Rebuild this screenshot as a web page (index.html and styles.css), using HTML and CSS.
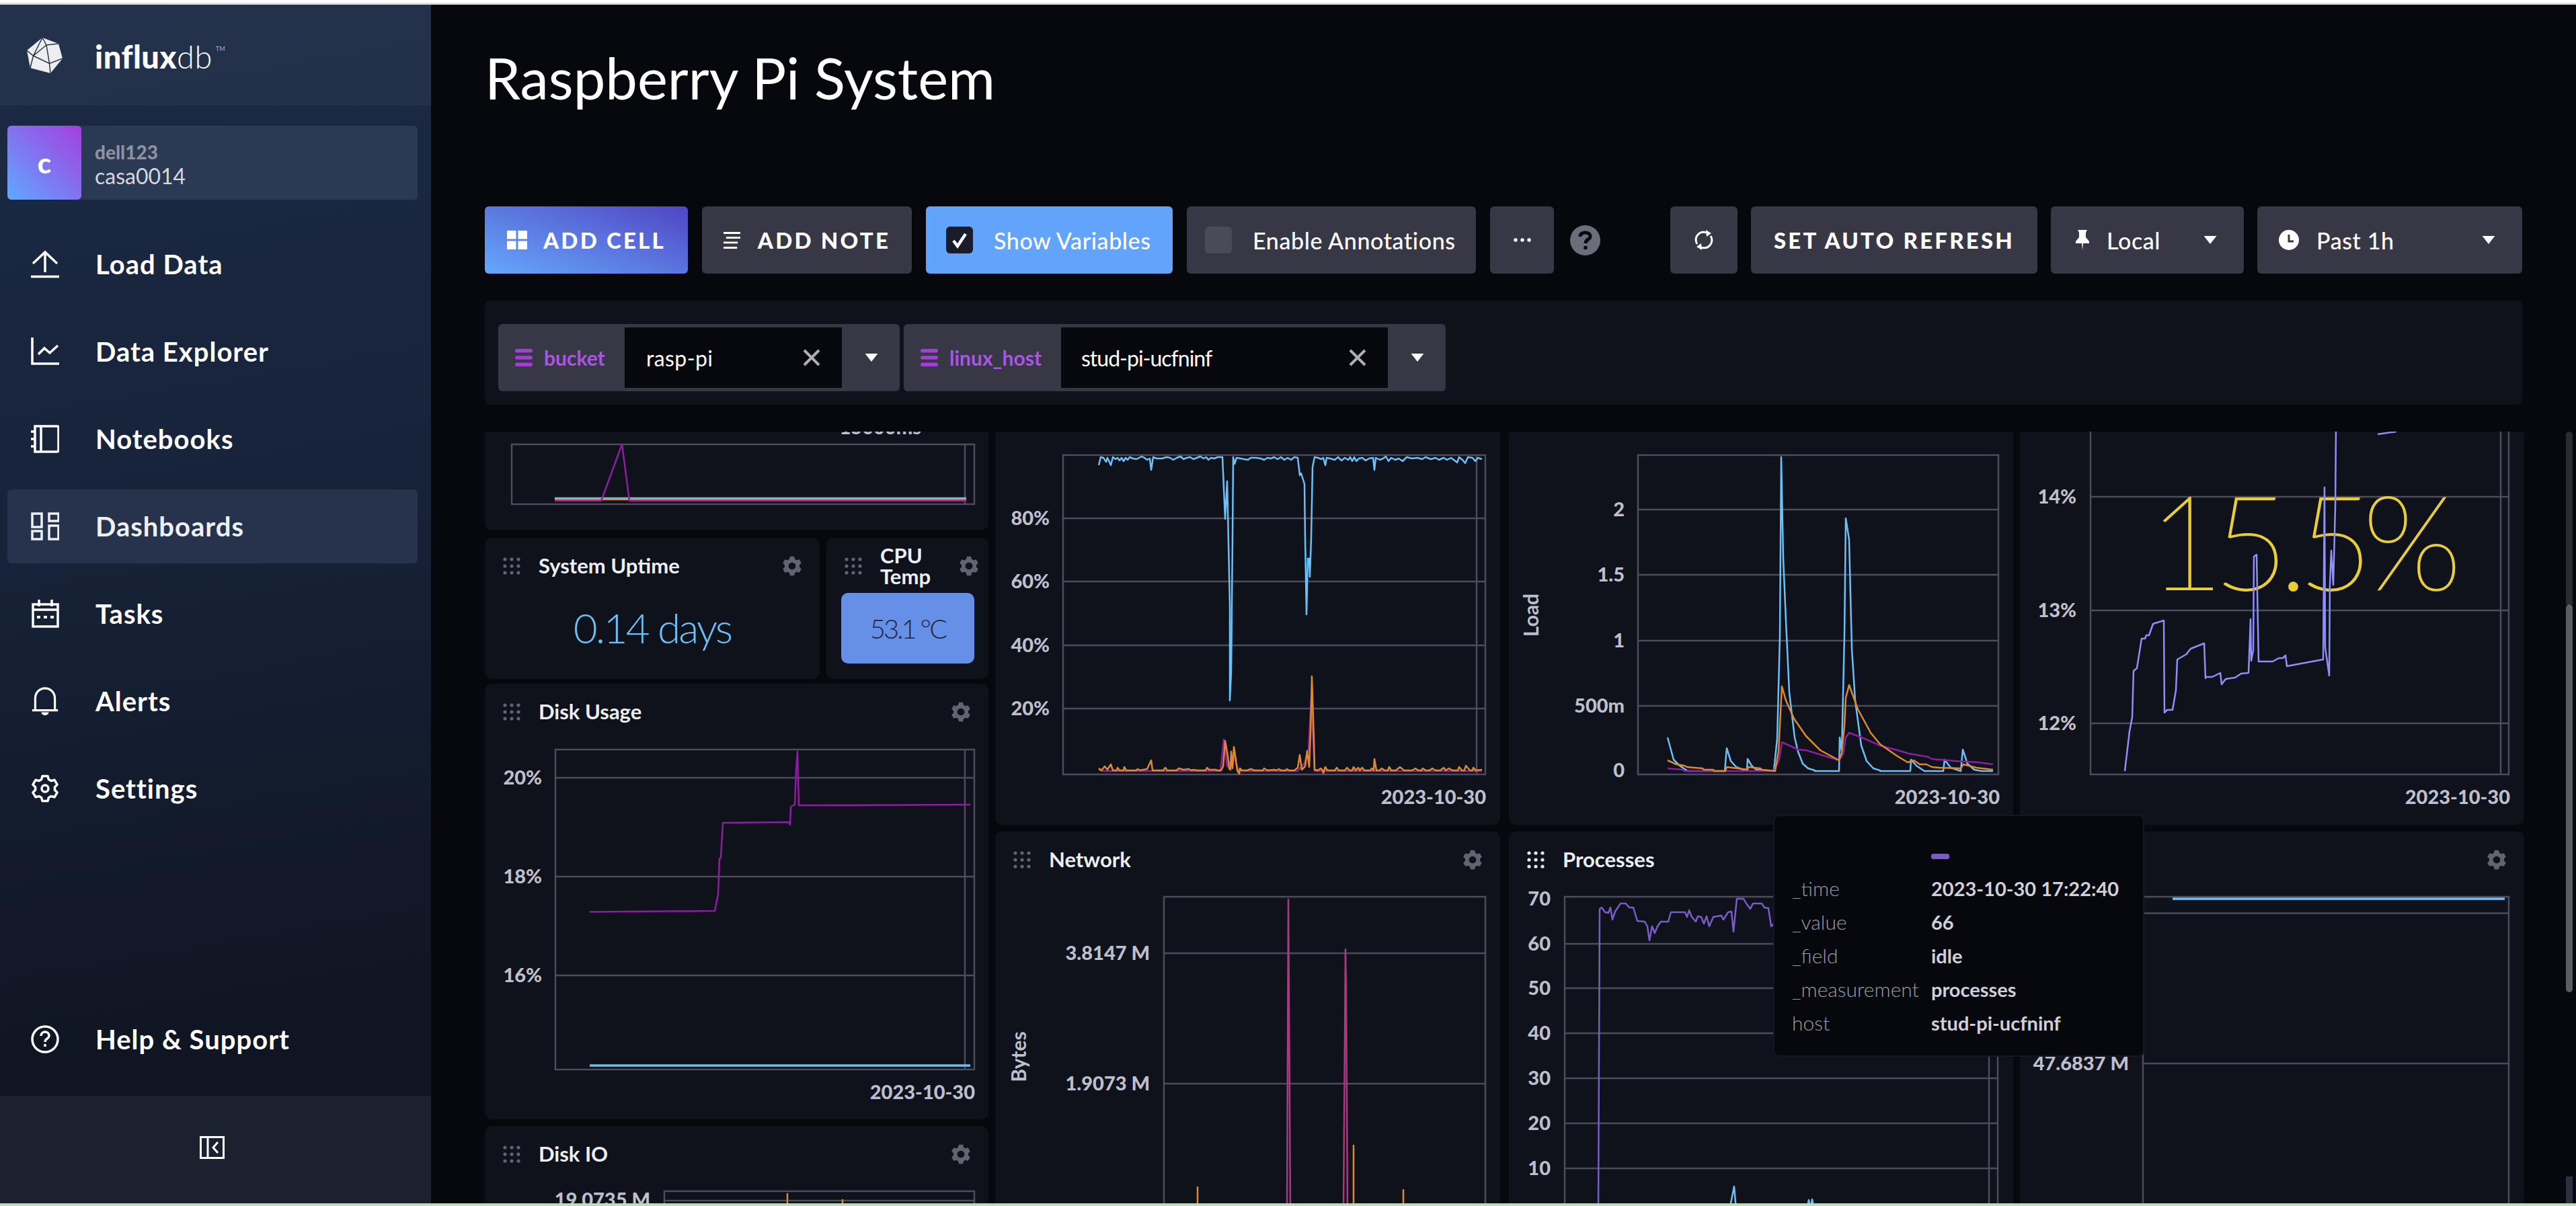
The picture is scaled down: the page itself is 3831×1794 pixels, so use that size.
FILE: index.html
```html
<!DOCTYPE html>
<html lang="en">
<head>
    <meta charset="UTF-8">
    <title>Raspberry Pi System</title>
    <link rel="stylesheet" href="styles.css">
</head>
<body>
    <svg class="sprite" xmlns="http://www.w3.org/2000/svg">
        <symbol id="cog" viewBox="0 0 42 42">
            <path fill-rule="evenodd" d="M17 2.4H25L26.4 7.6 29.9 9.6 35.1 8.3 39.1 15.1 35.4 19V23L39.1 26.9 35.1 33.7 29.9 32.4 26.4 34.4 25 39.6H17L15.6 34.4 12.1 32.4 6.9 33.7 2.9 26.9 6.6 23V19L2.9 15.1 6.9 8.3 12.1 9.6 15.6 7.6ZM21 14a7 7 0 1 0 .01 0Z"/>
        </symbol>
        <symbol id="dots" viewBox="0 0 26 26">
            <circle cx="3" cy="3" r="2.6"/><circle cx="13" cy="3" r="2.6"/><circle cx="23" cy="3" r="2.6"/>
            <circle cx="3" cy="13" r="2.6"/><circle cx="13" cy="13" r="2.6"/><circle cx="23" cy="13" r="2.6"/>
            <circle cx="3" cy="23" r="2.6"/><circle cx="13" cy="23" r="2.6"/><circle cx="23" cy="23" r="2.6"/>
        </symbol>
        <symbol id="caret" viewBox="0 0 22 14">
            <path d="M0 0H22L11 14Z"/>
        </symbol>
        <symbol id="menu" viewBox="0 0 26 26">
            <rect x="0" y="0" width="26" height="5.4" rx="2.7"/><rect x="0" y="10.3" width="26" height="5.4" rx="2.7"/><rect x="0" y="20.6" width="26" height="5.4" rx="2.7"/>
        </symbol>
    </svg>

    <div class="edge-top"></div>

    <div class="app">
        <aside class="sidebar">
            <div class="brand">
                <svg class="brand-mark" viewBox="0 0 53 55">
                    <path class="brand-body" d="M23 1 47 10 53 32 35 54 5 46 0 20Z"/>
                    <path class="brand-cuts" d="M23 1 29 12 47 10M29 12 9.500 28 0 20M9.500 28 5 46M9.500 28 33.500 39.500 53 32M29 12 33.500 39.500 35 54M23 1 9.500 28"/>
                </svg>
                <span class="brand-name"><b>influx</b>db<sup>TM</sup></span>
            </div>

            <nav class="nav">
                <div class="org">
                    <div class="org-avatar">c</div>
                    <div class="org-text">
                        <span class="org-user">dell123</span>
                        <span class="org-name">casa0014</span>
                    </div>
                </div>

                <a class="nav-item">
                    <svg class="nav-icon" viewBox="0 0 42 42"><path d="M3 20 21 3 39 20M21 3V33"/><path d="M0 39.500H42"/></svg>
                    <span>Load Data</span>
                </a>
                <a class="nav-item">
                    <svg class="nav-icon" viewBox="0 0 42 42"><path d="M2 0V39H42"/><path d="M11 25 20 16 28 23 40 12"/></svg>
                    <span>Data Explorer</span>
                </a>
                <a class="nav-item">
                    <svg class="nav-icon" viewBox="0 0 42 42"><path d="M6 2H39Q41 2 41 4V38Q41 40 39 40H6ZM15 2V40M0 10H6M0 21H6M0 32H6"/></svg>
                    <span>Notebooks</span>
                </a>
                <a class="nav-item nav-item-active">
                    <svg class="nav-icon" viewBox="0 0 42 42"><path d="M2 2H16V22H2ZM27 2H41V13H27ZM2 28H16V40H2ZM27 20H41V40H27Z"/></svg>
                    <span>Dashboards</span>
                </a>
                <a class="nav-item">
                    <svg class="nav-icon" viewBox="0 0 42 42"><path d="M3 7H40V40H3ZM3 15H40M12 0V10M31 0V10"/><path class="nav-icon-dash" d="M9 26H34"/></svg>
                    <span>Tasks</span>
                </a>
                <a class="nav-item">
                    <svg class="nav-icon" viewBox="0 0 42 46"><path d="M5 37V19C5 9 12 2 21 2S37 9 37 19V37M0 38H42"/><path class="nav-icon-fill" d="M15 41H27C27 44 24 46 21 46S15 44 15 41Z"/></svg>
                    <span>Alerts</span>
                </a>
                <a class="nav-item">
                    <svg class="nav-icon" viewBox="0 0 42 42"><path stroke-linejoin="round" d="M17 2.400H25L26.400 7.600 29.900 9.600 35.100 8.300 39.100 15.100 35.400 19V23L39.100 26.900 35.100 33.700 29.900 32.400 26.400 34.400 25 39.600H17L15.600 34.400 12.100 32.400 6.900 33.700 2.900 26.900 6.600 23V19L2.900 15.100 6.900 8.300 12.100 9.600 15.600 7.600Z"/><circle cx="21" cy="21" r="5"/></svg>
                    <span>Settings</span>
                </a>
                <a class="nav-item nav-item-bottom">
                    <svg class="nav-icon" viewBox="0 0 42 42"><circle cx="21" cy="21" r="19"/><path d="M15 16C15 12 18 10 21 10S27 12 27 16 21 20 21 25"/><path d="M21 28V32"/></svg>
                    <span>Help &amp; Support</span>
                </a>
            </nav>

            <div class="sidebar-foot">
                <svg class="collapse-icon" viewBox="0 0 37 34"><path d="M1.500 1.500H35.500V32.500H1.500ZM12 1.500V32.500M27 9 20 17 27 25"/></svg>
            </div>
        </aside>

        <main class="main">
            <h1 class="page-title">Raspberry Pi System</h1>

            <div class="toolbar">
                <button class="btn btn-cell">
                    <svg class="btn-icon" viewBox="0 0 30 28"><path d="M0 0H13.500V12.500H0ZM16.500 0H30V12.500H16.500ZM0 15.500H13.500V28H0ZM16.500 15.500H30V28H16.500Z"/></svg>
                    <span class="btn-caps">ADD CELL</span>
                </button>
                <button class="btn btn-note">
                    <svg class="btn-icon" viewBox="0 0 26 26"><path d="M0 0H26V3H0ZM4 7.500H26V10.500H4ZM0 15H22V18H0ZM0 23H21V26H0Z"/></svg>
                    <span class="btn-caps">ADD NOTE</span>
                </button>
                <button class="btn btn-toggle btn-on">
                    <span class="check"><svg viewBox="0 0 40 40"><path d="M11 21 17 29 29 11"/></svg></span>
                    <span>Show Variables</span>
                </button>
                <button class="btn btn-toggle btn-off">
                    <span class="check check-empty"></span>
                    <span>Enable Annotations</span>
                </button>
                <button class="btn btn-more">
                    <svg class="more-icon" viewBox="0 0 22 5"><circle cx="2.500" cy="2.500" r="2.300"/><circle cx="11" cy="2.500" r="2.300"/><circle cx="19.500" cy="2.500" r="2.300"/></svg>
                </button>
                <svg class="help-dot" viewBox="0 0 45 45">
                    <circle cx="22.500" cy="22.500" r="22.500"/>
                    <path d="M15 17C15 13 18 11 22.500 11S30 13 30 17 23 21 23 27"/>
                    <path d="M23 31V36"/>
                </svg>

                <div class="toolbar-right">
                    <button class="btn btn-refresh">
                        <svg class="refresh-icon" viewBox="0 0 30 30"><path d="M5 21A11.500 11.500 0 0 1 20 4.500M25 9A11.500 11.500 0 0 1 10 25.500"/><path class="refresh-tip" d="M18 0 26 5 19 10ZM12 30 4 25 11 20Z"/></svg>
                    </button>
                    <button class="btn btn-auto"><span class="btn-caps">SET AUTO REFRESH</span></button>
                    <button class="btn btn-drop btn-local">
                        <svg class="pin-icon" viewBox="0 0 20 30"><path d="M3 0H17L15 4V11L20 17V20H11L10 30 9 20H0V17L5 11V4Z"/></svg>
                        <span>Local</span>
                        <svg class="drop-caret"><use href="#caret"/></svg>
                    </button>
                    <button class="btn btn-drop btn-range">
                        <svg class="clock-icon" viewBox="0 0 30 30"><circle cx="15" cy="15" r="15"/><path d="M15 7V17H22"/></svg>
                        <span>Past 1h</span>
                        <svg class="drop-caret"><use href="#caret"/></svg>
                    </button>
                </div>
            </div>

            <div class="variables">
                <div class="var var-bucket">
                    <svg class="var-menu"><use href="#menu"/></svg>
                    <span class="var-name">bucket</span>
                    <div class="var-input">
                        <span>rasp-pi</span>
                        <svg class="var-clear" viewBox="0 0 26 26"><path d="M2 2 24 24M24 2 2 24"/></svg>
                    </div>
                    <svg class="var-caret"><use href="#caret"/></svg>
                </div>
                <div class="var var-host">
                    <svg class="var-menu"><use href="#menu"/></svg>
                    <span class="var-name">linux_host</span>
                    <div class="var-input">
                        <span>stud-pi-ucfninf</span>
                        <svg class="var-clear" viewBox="0 0 26 26"><path d="M2 2 24 24M24 2 2 24"/></svg>
                    </div>
                    <svg class="var-caret"><use href="#caret"/></svg>
                </div>
            </div>

            <div class="cells">
                <div class="col col-one">
                    <section class="cell cell-clipped cell-swap">
                        <svg class="chart chart-swap" viewBox="721 642 749 147">
                            <text class="axis-label" x="1370" y="646" text-anchor="end">15000ms</text>
                            <path class="grid" d="M761 661H1449V750H761ZM1435 661V750"/>
                            <path class="line line-blue" d="M825 741H1437"/>
                            <path class="line line-orange" d="M825 743H1437"/>
                            <path class="line line-purple" d="M825 745H894L925 661 936 745H1437"/>
                        </svg>
                    </section>

                    <div class="cell-row">
                        <section class="cell cell-uptime">
                            <header class="cell-head">
                                <svg class="drag"><use href="#dots"/></svg>
                                <h2 class="cell-title">System Uptime</h2>
                                <svg class="gear"><use href="#cog"/></svg>
                            </header>
                            <div class="stat-uptime">0.14 days</div>
                        </section>
                        <section class="cell cell-temp">
                            <header class="cell-head cell-head-tight">
                                <svg class="drag"><use href="#dots"/></svg>
                                <h2 class="cell-title">CPU<br>Temp</h2>
                                <svg class="gear"><use href="#cog"/></svg>
                            </header>
                            <div class="stat-temp">53.1 °C</div>
                        </section>
                    </div>

                    <section class="cell cell-disk">
                        <header class="cell-head">
                            <svg class="drag"><use href="#dots"/></svg>
                            <h2 class="cell-title">Disk Usage</h2>
                            <svg class="gear"><use href="#cog"/></svg>
                        </header>
                        <svg class="chart chart-disk" viewBox="721 1101 749 564">
                            <path class="grid" d="M826 1115H1449V1591H826ZM826 1157H1449M826 1304H1449M826 1451H1449M1435 1115V1591"/>
                            <text class="axis-label" x="806" y="1167" text-anchor="end">20%</text>
                            <text class="axis-label" x="806" y="1314" text-anchor="end">18%</text>
                            <text class="axis-label" x="806" y="1461" text-anchor="end">16%</text>
                            <path class="line line-purple" d="M877 1356.500 1063 1355 1068 1330 1070 1277 1072 1276 1075 1224 1173 1223 1175 1227 1176 1200 1182 1197 1184 1145 1186 1118 1188 1198 1443 1197"/>
                            <path class="line line-blue line-thick" d="M877 1585H1443"/>
                            <text class="axis-label" x="1450" y="1635" text-anchor="end">2023-10-30</text>
                        </svg>
                    </section>

                    <section class="cell cell-io">
                        <header class="cell-head">
                            <svg class="drag"><use href="#dots"/></svg>
                            <h2 class="cell-title">Disk IO</h2>
                            <svg class="gear"><use href="#cog"/></svg>
                        </header>
                        <svg class="chart chart-io" viewBox="721 1759 749 60">
                            <path class="grid" d="M988 1772H1449V1819H988ZM988 1786H1449"/>
                            <text class="axis-label" x="967" y="1795" text-anchor="end">19.0735 M</text>
                            <path class="line line-orange" d="M1171 1775V1819M1253 1784V1819"/>
                        </svg>
                    </section>
                </div>

                <div class="col col-two">
                    <section class="cell cell-clipped cell-tall">
                        <svg class="chart chart-tall" viewBox="1480 642 751 585">
                            <path class="grid" d="M1581 677H2209V1152H1581ZM1581 771H2209M1581 865H2209M1581 960H2209M1581 1054H2209M2196 677V1152"/>
                            <text class="axis-label" x="1561" y="781" text-anchor="end">80%</text>
                            <text class="axis-label" x="1561" y="875" text-anchor="end">60%</text>
                            <text class="axis-label" x="1561" y="970" text-anchor="end">40%</text>
                            <text class="axis-label" x="1561" y="1064" text-anchor="end">20%</text>
                            <path class="line line-purple" d="M1634 1145 1640 1147H1815L1820 1100 1825 1140 1835 1125 1842 1147H1930L1940 1135 1946 1115 1950 1040 1955 1147H2204"/>
                            <path class="line line-blue" d="M1634 692 1637 680 1641 681 1645 687 1647 681 1652 692 1655 680 1659 683 1662 681 1665 685 1668 681 1671 686 1674 681 1677 684 1680 680 1685 682 1690 683 1694 681 1698 679 1702 681 1706 684 1710 682 1712 699 1715 680 1720 682 1728 682 1735 680 1740 681 1745 684 1750 681 1756 679 1760 683 1765 681 1770 680 1775 683 1780 681 1785 679 1790 682 1794 680 1797 684 1801 681 1806 682 1811 680 1818 680 1822 772 1825 716 1829 900 1829 1042 1831 1000 1833 800 1834 680 1836 690 1839 681 1845 682 1850 683 1856 684 1860 681 1868 681 1875 682 1880 684 1885 681 1890 682 1895 680 1900 683 1905 680 1910 684 1915 681 1920 684 1925 680 1930 681 1933 707 1935 704 1940 720 1941 800 1943 914 1945 831 1947 831 1948 858 1950 800 1952 695 1955 680 1960 681 1965 683 1968 681 1971 692 1973 681 1978 682 1985 684 1990 680 1995 685 2000 681 2005 684 2008 680 2011 686 2014 680 2017 686 2021 682 2026 681 2031 685 2036 682 2042 681 2044 699 2046 681 2052 684 2057 682 2061 679 2065 686 2069 681 2075 684 2080 682 2086 686 2092 680 2100 682 2108 681 2115 683 2120 680 2128 683 2135 681 2140 684 2147 681 2152 684 2158 681 2162 684 2167 688 2170 680 2175 684 2179 689 2183 680 2190 681 2194 686 2198 681 2204 683"/>
                            <path class="line line-orange" d="M1634 1143 1638 1146 1643 1140 1647 1145 1652 1137 1655 1146 1661 1146 1662 1142 1665 1146 1671 1146 1672 1141 1675 1146 1690 1146 1692 1144 1696 1146 1700 1145 1706 1144 1712 1131 1714 1146 1730 1146 1733 1142 1736 1146 1750 1146 1753 1143 1760 1145 1768 1144 1772 1146 1775 1145 1780 1146 1793 1146 1795 1142 1798 1145 1808 1145 1811 1146 1816 1146 1819 1140 1822 1102 1826 1125 1828 1143 1830 1145 1831 1118 1833 1143 1835 1111 1838 1130 1840 1146 1843 1151 1844 1143 1847 1146 1855 1146 1860 1144 1866 1146 1878 1146 1880 1143 1885 1146 1895 1145 1898 1146 1902 1144 1905 1146 1912 1146 1914 1144 1917 1146 1925 1146 1930 1142 1933 1123 1936 1145 1941 1140 1944 1117 1947 1141 1949 1090 1951 1006 1954 1100 1955 1145 1960 1146 1964 1143 1967 1146 1968 1150 1971 1141 1974 1146 1985 1146 1988 1142 1991 1146 2000 1146 2003 1142 2007 1146 2011 1146 2013 1141 2016 1146 2020 1142 2022 1146 2026 1142 2029 1146 2038 1146 2040 1143 2043 1146 2044 1129 2047 1146 2052 1146 2055 1143 2059 1146 2064 1146 2066 1141 2069 1146 2076 1146 2082 1141 2088 1146 2100 1146 2105 1143 2109 1146 2114 1146 2116 1143 2120 1146 2126 1146 2130 1143 2135 1146 2142 1146 2147 1142 2150 1146 2155 1143 2160 1146 2168 1146 2170 1141 2174 1146 2178 1146 2180 1139 2186 1146 2190 1146 2191 1142 2195 1146 2204 1145"/>
                            <text class="axis-label" x="2210" y="1196" text-anchor="end">2023-10-30</text>
                        </svg>
                    </section>

                    <section class="cell cell-low">
                        <header class="cell-head">
                            <svg class="drag"><use href="#dots"/></svg>
                            <h2 class="cell-title">Network</h2>
                            <svg class="gear"><use href="#cog"/></svg>
                        </header>
                        <svg class="chart chart-low" viewBox="1480 1321 751 469">
                            <path class="grid" d="M1731 1334H2209V1800H1731ZM1731 1418H2209M1731 1612H2209"/>
                            <text class="axis-label" x="1710" y="1428" text-anchor="end">3.8147 M</text>
                            <text class="axis-label" x="1710" y="1622" text-anchor="end">1.9073 M</text>
                            <text class="axis-title" transform="translate(1526 1572) rotate(-90)" text-anchor="middle">Bytes</text>
                            <path class="line line-pink" d="M1914 1800 1916 1338 1919 1800M1998 1800 2001 1412 2002 1480 2004 1800"/>
                            <path class="line line-orange" d="M1781 1800V1765M2013 1800V1703M2087 1800V1769"/>
                        </svg>
                    </section>
                </div>

                <div class="col col-three">
                    <section class="cell cell-clipped cell-tall">
                        <svg class="chart chart-tall" viewBox="2244 642 750 585">
                            <path class="grid" d="M2436 677H2972V1152H2436ZM2436 758H2972M2436 855H2972M2436 953H2972M2436 1050H2972"/>
                            <text class="axis-label" x="2416" y="768" text-anchor="end">2</text>
                            <text class="axis-label" x="2416" y="865" text-anchor="end">1.5</text>
                            <text class="axis-label" x="2416" y="963" text-anchor="end">1</text>
                            <text class="axis-label" x="2416" y="1060" text-anchor="end">500m</text>
                            <text class="axis-label" x="2416" y="1156" text-anchor="end">0</text>
                            <text class="axis-title" transform="translate(2288 915) rotate(-90)" text-anchor="middle">Load</text>
                            <path class="line line-blue" d="M2480 1097 2489 1130 2498 1139 2510 1147 2565 1147 2568 1113 2574 1132 2582 1141 2595 1146 2598 1146 2599 1129 2605 1139 2612 1145 2638 1147 2643 1099 2647 946 2649 680 2652 831 2656 923 2661 1030 2669 1097 2674 1118 2681 1136 2689 1143 2699 1146 2699 1147 2735 1147 2736 1097 2739 1118 2743 946 2745 771 2750 803 2754 965 2759 1042 2768 1109 2776 1132 2786 1143 2796 1146 2796 1147 2841 1147 2842 1130 2850 1139 2862 1147 2890 1147 2892 1130 2901 1142 2916 1147 2919 1115 2926 1136 2936 1145 2947 1147 2964 1147"/>
                            <path class="line line-purple" d="M2480 1143 2503 1145 2505 1147 2638 1147 2646 1130 2650 1104 2674 1115 2686 1116 2712 1124 2735 1131 2741 1122 2745 1097 2750 1090 2771 1098 2796 1109 2822 1116 2839 1121 2868 1126 2873 1129 2908 1132 2942 1134 2964 1137"/>
                            <path class="line line-orange" d="M2480 1131 2493 1137 2505 1139 2509 1141 2532 1143 2534 1145 2548 1145 2549 1147 2566 1147 2568 1141 2592 1144 2599 1145 2600 1141 2618 1143 2620 1145 2640 1147 2645 1118 2650 1021 2656 1042 2668 1069 2686 1095 2707 1116 2735 1131 2739 1120 2743 1080 2745 1038 2750 1019 2763 1055 2782 1090 2796 1107 2822 1125 2837 1134 2846 1131 2855 1137 2865 1137 2873 1141 2884 1142 2916 1143 2920 1137 2939 1142 2964 1145"/>
                            <text class="axis-label" x="2974" y="1196" text-anchor="end">2023-10-30</text>
                        </svg>
                    </section>

                    <section class="cell cell-low">
                        <header class="cell-head">
                            <svg class="drag drag-hover"><use href="#dots"/></svg>
                            <h2 class="cell-title">Processes</h2>
                            <svg class="gear"><use href="#cog"/></svg>
                        </header>
                        <svg class="chart chart-low" viewBox="2244 1321 750 469">
                            <path class="grid" d="M2327 1334H2971V1800H2327ZM2327 1404H2971M2327 1470H2971M2327 1537H2971M2327 1604H2971M2327 1671H2971M2327 1738H2971M2958 1334V1800"/>
                            <text class="axis-label" x="2306" y="1347" text-anchor="end">70</text>
                            <text class="axis-label" x="2306" y="1414" text-anchor="end">60</text>
                            <text class="axis-label" x="2306" y="1480" text-anchor="end">50</text>
                            <text class="axis-label" x="2306" y="1547" text-anchor="end">40</text>
                            <text class="axis-label" x="2306" y="1614" text-anchor="end">30</text>
                            <text class="axis-label" x="2306" y="1681" text-anchor="end">20</text>
                            <text class="axis-label" x="2306" y="1748" text-anchor="end">10</text>
                            <path class="line line-violet" d="M2377 1800 2379 1352 2382 1350 2387 1357 2392 1358 2395 1350 2398 1368 2402 1356 2410 1344 2418 1344 2423 1350 2429 1350 2435 1370 2446 1371 2450 1378 2453 1399 2457 1378 2461 1388 2465 1378 2470 1371 2481 1371 2485 1357 2506 1357 2509 1364 2512 1354 2516 1364 2522 1371 2525 1363 2530 1364 2534 1374 2538 1363 2542 1378 2548 1364 2560 1362 2563 1368 2570 1357 2575 1356 2578 1386 2583 1337 2593 1337 2597 1344 2603 1352 2607 1344 2620 1344 2624 1350 2630 1351 2634 1378 2640 1372"/>
                            <path class="line line-blue" d="M2572 1800 2575 1785 2579 1765 2582 1800M2687 1800 2690 1785 2692 1800 2695 1784 2698 1800"/>
                        </svg>
                    </section>
                </div>

                <div class="col col-four">
                    <section class="cell cell-clipped cell-tall">
                        <svg class="chart chart-tall" viewBox="3004 642 750 585">
                            <path class="grid" d="M3109 642V1152H3731V642M3109 739H3731M3109 908H3731M3109 1076H3731M3719 642V1152"/>
                            <text class="axis-label" x="3088" y="749" text-anchor="end">14%</text>
                            <text class="axis-label" x="3088" y="918" text-anchor="end">13%</text>
                            <text class="axis-label" x="3088" y="1086" text-anchor="end">12%</text>
                            <text class="stat-cpu" x="3420" y="877" text-anchor="middle">15.5%</text>
                            <path class="line line-lilac" d="M3160 1147 3167 1088 3171 1067 3173 998 3178 994 3185 950 3190 950 3192 945 3196 945 3202 928 3218 923 3219 1060 3223 1056 3231 1056 3236 1027 3238 981 3252 973 3254 970 3258 965 3268 961 3278 957 3280 1009 3281 1007 3290 1007 3302 1001 3304 1018 3310 1010 3324 1008 3333 1002 3344 1001 3347 921 3348 983 3351 967 3352 828 3356 825 3359 984 3380 984 3389 979 3395 979 3399 975 3401 991 3455 981 3457 725 3458 963 3464 1005 3465 870 3467 819 3470 870 3473 755 3474 642M3536 646 3564 642"/>
                            <text class="axis-label" x="3733" y="1196" text-anchor="end">2023-10-30</text>
                        </svg>
                    </section>

                    <section class="cell cell-low">
                        <header class="cell-head">
                            <svg class="drag"><use href="#dots"/></svg>
                            <h2 class="cell-title">Swap</h2>
                            <svg class="gear"><use href="#cog"/></svg>
                        </header>
                        <svg class="chart chart-low" viewBox="3004 1321 750 469">
                            <path class="grid" d="M3187 1334H3731V1800H3187ZM3187 1358.500H3731M3187 1582H3731"/>
                            <text class="axis-label" x="3166" y="1592" text-anchor="end">47.6837 M</text>
                            <path class="line line-blue line-thick" d="M3231 1337H3725"/>
                        </svg>
                    </section>
                </div>

                <div class="scrollbar">
                    <div class="scroll-track"></div>
                    <div class="scroll-thumb"></div>
                    <div class="scroll-end"></div>
                </div>

                <div class="tooltip">
                    <div></div><div class="tooltip-swatch"></div>
                    <span class="tooltip-key">_time</span><span class="tooltip-val">2023-10-30 17:22:40</span>
                    <span class="tooltip-key">_value</span><span class="tooltip-val">66</span>
                    <span class="tooltip-key">_field</span><span class="tooltip-val">idle</span>
                    <span class="tooltip-key">_measurement</span><span class="tooltip-val">processes</span>
                    <span class="tooltip-key">host</span><span class="tooltip-val">stud-pi-ucfninf</span>
                </div>
            </div>
        </main>
    </div>

    <div class="edge-bottom"></div>
</body>
</html>
```

FILE: styles.css
```css
* {
    box-sizing: border-box;
}

html, body {
    margin: 0;
    height: 100%;
    overflow: hidden;
}

body {
    display: flex;
    flex-direction: column;
    background: #07080d;
    color: #fff;
    font-family: 'Lato', 'Open Sans', sans-serif;
}

.sprite {
    display: none;
}

.edge-top {
    height: 7px;
    flex: none;
    background: linear-gradient(#fff 0 4px, #dfdfdf 4px);
}

.edge-bottom {
    height: 4px;
    flex: none;
    background: #bcdcbc;
}

.app {
    flex: 1;
    display: flex;
    min-height: 0;
}

/* sidebar */

.sidebar {
    width: 641px;
    flex: none;
    display: flex;
    flex-direction: column;
    background: linear-gradient(170deg, #1c2a46 0%, #172339 42%, #0f1522 85%);
}

.brand {
    height: 150px;
    flex: none;
    display: flex;
    align-items: center;
    padding: 0 0 0 40px;
    background: rgba(255, 255, 255, 0.04);
}

.brand-mark {
    width: 53px;
    height: 55px;
}

.brand-body {
    fill: #eeeef0;
}

.brand-cuts {
    fill: none;
    stroke: #27324a;
    stroke-width: 1.5;
}

.brand-name {
    margin: 4px 0 0 48px;
    font-size: 47px;
    font-weight: 300;
    letter-spacing: 0.5px;
}

.brand-name b {
    font-weight: 900;
}

.brand-name sup {
    font-size: 9px;
    vertical-align: 26px;
    margin-left: 5px;
}

.nav {
    flex: 1;
    display: flex;
    flex-direction: column;
    gap: 20px;
    padding: 30px 20px 29px 11px;
}

.org {
    height: 110px;
    flex: none;
    display: flex;
    margin-bottom: 21px;
    border-radius: 6px;
    background: #2a3954;
}

.org-avatar {
    width: 110px;
    display: flex;
    align-items: center;
    justify-content: center;
    border-radius: 6px;
    background: linear-gradient(45deg, #5fa8ff, #a53ee0);
    font-size: 42px;
    font-weight: 900;
}

.org-text {
    display: flex;
    flex-direction: column;
    justify-content: center;
    padding: 4px 0 0 20px;
}

.org-user {
    font-size: 28px;
    line-height: 36px;
    font-weight: 900;
    color: #8f90a0;
}

.org-name {
    font-size: 32px;
    line-height: 36px;
    font-weight: 400;
    color: #d5d6de;
}

.nav-item {
    height: 110px;
    flex: none;
    display: flex;
    align-items: center;
    gap: 54px;
    padding-left: 35px;
    border-radius: 6px;
    font-size: 40px;
    font-weight: 700;
    letter-spacing: 1px;
}

.nav-item-active {
    background: #27334d;
    color: #eef0f8;
}

.nav-item-bottom {
    margin-top: auto;
}

.nav-icon {
    width: 42px;
    height: 42px;
    flex: none;
    fill: none;
    stroke: currentColor;
    stroke-width: 3.5;
}

.nav-icon-dash {
    stroke-dasharray: 5 5;
    stroke-width: 4;
}

.nav-icon-fill {
    fill: currentColor;
    stroke: none;
}

.sidebar-foot {
    height: 160px;
    flex: none;
    display: flex;
    align-items: center;
    justify-content: center;
    padding: 0 10px 6px 0;
    background: #1b212e;
}

.collapse-icon {
    width: 37px;
    height: 34px;
    fill: none;
    stroke: #fff;
    stroke-width: 3;
}

/* main */

.main {
    position: relative;
    flex: 1;
    min-width: 0;
    display: flex;
    flex-direction: column;
    padding-left: 80px;
}

.page-title {
    height: 300px;
    flex: none;
    margin: 0;
    padding-top: 60px;
    font-size: 85px;
    line-height: 96px;
    font-weight: 400;
}

.toolbar {
    height: 100px;
    flex: none;
    display: flex;
    align-items: center;
    gap: 21px;
    margin-right: 80px;
}

.toolbar-right {
    display: flex;
    gap: 20px;
    margin-left: auto;
}

.btn {
    height: 100px;
    flex: none;
    display: flex;
    align-items: center;
    justify-content: center;
    padding: 0;
    border: none;
    border-radius: 6px;
    background: #373745;
    color: #fff;
    font-family: inherit;
    font-size: 34px;
    font-weight: 500;
    letter-spacing: 0.6px;
}

.btn-caps {
    font-size: 33px;
    font-weight: 900;
    letter-spacing: 3.2px;
}

.btn-icon {
    flex: none;
    fill: #fff;
}

.btn-cell {
    width: 302px;
    gap: 24px;
    background: linear-gradient(20deg, #65a8fd 0%, #5a72dd 55%, #4f45c3 100%);
}

.btn-cell .btn-icon {
    width: 30px;
    height: 28px;
}

.btn-note {
    width: 312px;
    gap: 26px;
}

.btn-note .btn-icon {
    width: 25px;
    height: 25px;
}

.btn-toggle {
    justify-content: flex-start;
    gap: 31px;
    padding-left: 30px;
}

.btn-on {
    width: 367px;
    background: #62a3fb;
}

.btn-off {
    width: 430px;
    padding-left: 27px;
}

.check {
    width: 40px;
    height: 40px;
    flex: none;
    border-radius: 6px;
    background: #1a1b2b;
}

.check svg {
    display: block;
    fill: none;
    stroke: #fff;
    stroke-width: 4.5;
}

.check-empty {
    background: #4a4a58;
}

.btn-more {
    width: 95px;
}

.more-icon {
    width: 26px;
    height: 6px;
    fill: #fff;
}

.help-dot {
    width: 45px;
    height: 45px;
    flex: none;
    margin-left: 3px;
    fill: none;
}

.help-dot circle {
    fill: #6c6d7b;
}

.help-dot path {
    stroke: #07080d;
    stroke-width: 5;
}

.btn-refresh {
    width: 100px;
}

.refresh-icon {
    width: 30px;
    height: 30px;
    fill: none;
    stroke: #fff;
    stroke-width: 3;
}

.refresh-tip {
    fill: #fff;
    stroke: none;
}

.btn-auto {
    width: 426px;
}

.btn-drop {
    justify-content: flex-start;
    gap: 26px;
}

.btn-local {
    width: 287px;
    padding: 0 39px 0 37px;
}

.btn-range {
    width: 394px;
    padding: 0 39px 0 32px;
}

.pin-icon {
    width: 20px;
    height: 30px;
    fill: #fff;
}

.clock-icon {
    width: 30px;
    height: 30px;
    fill: none;
}

.clock-icon circle {
    fill: #fff;
}

.clock-icon path {
    stroke: #373745;
    stroke-width: 3;
}

.drop-caret {
    width: 22px;
    height: 12px;
    margin-left: auto;
    fill: #fff;
}

/* variables */

.variables {
    height: 155px;
    flex: none;
    display: flex;
    gap: 6px;
    margin: 40px 80px 40px 0;
    padding: 35px 20px;
    border-radius: 6px;
    background: #10111b;
}

.var {
    height: 100px;
    display: flex;
    align-items: center;
    border-radius: 6px;
    background: #373745;
}

.var-bucket {
    width: 597px;
}

.var-host {
    width: 806px;
}

.var-menu {
    width: 26px;
    height: 26px;
    flex: none;
    margin-left: 25px;
    fill: #a23fd6;
}

.var-name {
    flex: 1;
    margin-left: 17px;
    font-size: 30px;
    font-weight: 700;
    color: #aa55e6;
}

.var-input {
    height: 90px;
    display: flex;
    align-items: center;
    justify-content: space-between;
    padding: 0 32px;
    background: #07080d;
    font-size: 32px;
}

.var-bucket .var-input {
    width: 323px;
    letter-spacing: 0.4px;
}

.var-host .var-input {
    width: 486px;
    padding: 0 32px 0 30px;
    letter-spacing: -1px;
}

.var-clear {
    width: 26px;
    height: 26px;
    flex: none;
    fill: none;
    stroke: #aeaeb4;
    stroke-width: 4;
}

.var-caret {
    width: 22px;
    height: 12px;
    flex: none;
    margin: 0 31px 0 33px;
    fill: #fff;
}

/* cells */

.cells {
    position: relative;
    flex: 1;
    min-height: 0;
    display: flex;
    padding-right: 5px;
    overflow: hidden;
}

.col {
    width: 750px;
    flex: none;
    display: flex;
    flex-direction: column;
    gap: 10px;
}

.col-one {
    width: 749px;
    gap: 7px;
    margin-right: 10px;
}

.col-two {
    width: 751px;
    margin-right: 13px;
}

.col-three {
    margin-right: 10px;
}

.cell {
    flex: none;
    overflow: hidden;
    border-radius: 10px;
    background: #0f111b;
}

.cell-clipped {
    border-top-left-radius: 0;
    border-top-right-radius: 0;
}

.cell-swap {
    height: 147px;
    margin-bottom: 4px;
}

.cell-row {
    height: 210px;
    flex: none;
    display: flex;
    gap: 10px;
}

.cell-uptime {
    width: 498px;
}

.cell-temp {
    width: 241px;
}

.cell-disk {
    height: 648px;
}

.cell-io {
    height: 200px;
    margin-top: 3px;
}

.cell-tall {
    height: 585px;
}

.cell-low {
    height: 600px;
}

.cell-head {
    height: 83px;
    display: flex;
    align-items: center;
    gap: 27px;
    padding: 0 25px 0 27px;
}

.cell-head-tight {
    padding-right: 13px;
}

.cell-title {
    margin: 0;
    font-size: 31px;
    line-height: 31px;
    font-weight: 700;
    color: #eeeff6;
}

.drag {
    width: 26px;
    height: 26px;
    flex: none;
    fill: #62636f;
}

.drag-hover {
    fill: #e6e7ef;
}

.gear {
    width: 32px;
    height: 32px;
    flex: none;
    margin-left: auto;
    fill: #62636f;
}

.chart {
    display: block;
    margin-top: 1px;
}

.chart-swap, .chart-tall {
    margin-top: 0;
}

.chart-swap {
    width: 749px;
    height: 147px;
}

.chart-tall {
    width: 100%;
    height: 585px;
}

.chart-disk {
    width: 749px;
    height: 564px;
}

.chart-io {
    width: 749px;
    height: 60px;
}

.chart-low {
    width: 100%;
    height: 469px;
}

.grid {
    fill: none;
    stroke: #4c4c5a;
    stroke-width: 2.5;
}

.line {
    fill: none;
    stroke-width: 2.5;
    stroke-linejoin: round;
}

.line-thick {
    stroke-width: 3.5;
}

.line-blue {
    stroke: #6bc1f7;
}

.line-orange {
    stroke: #e0882f;
}

.line-purple {
    stroke: #8b1fa0;
}

.line-pink {
    stroke: #a93a82;
}

.line-violet {
    stroke: #7a5cc8;
}

.line-lilac {
    stroke: #8f8ff5;
}

.axis-label {
    fill: #bebfcc;
    font-size: 29px;
    font-weight: 900;
}

.axis-title {
    fill: #bebfcc;
    font-size: 30px;
    font-weight: 700;
}

.stat-uptime {
    padding: 8px 0 0;
    text-align: center;
    font-size: 62px;
    line-height: 84px;
    font-weight: 300;
    letter-spacing: -2.8px;
    color: #6bc1f7;
}

.stat-temp {
    height: 105px;
    display: flex;
    align-items: center;
    justify-content: center;
    margin: -1px 21px 0 22px;
    border-radius: 10px;
    background: #6690e8;
    font-size: 40px;
    font-weight: 300;
    letter-spacing: -3px;
    color: #22263a;
}

.stat-cpu {
    fill: #e8cc3a;
    stroke: #e8cc3a;
    stroke-width: 2;
    font-size: 194px;
    font-weight: 200;
    letter-spacing: -16px;
}

/* scrollbar and tooltip lie at the right edge and over the cells */

.scrollbar {
    width: 10px;
    flex: none;
    display: flex;
    flex-direction: column;
    margin-left: auto;
}

.scroll-track {
    height: 257px;
    flex: none;
    border-radius: 5px 5px 0 0;
    background: #2a2b35;
}

.scroll-thumb {
    height: 577px;
    flex: none;
    border-radius: 5px;
    background: #5b5c66;
}

.scroll-end {
    height: 40px;
    flex: none;
    margin-top: auto;
    background: #2a3040;
}

.tooltip {
    position: absolute;
    left: 1916px;
    top: 570px;
    width: 552px;
    height: 360px;
    display: grid;
    grid-template-columns: 207px 1fr;
    grid-template-rows: 30px repeat(5, 50px);
    align-items: center;
    padding: 52px 0 0 26px;
    border: 2px solid #161722;
    border-radius: 8px;
    background: #07080d;
}

.tooltip-swatch {
    width: 27px;
    height: 8px;
    margin-top: -14px;
    border-radius: 3px;
    background: #7c5cc4;
}

.tooltip-key {
    font-size: 30px;
    font-weight: 300;
    color: #9a9ba6;
}

.tooltip-val {
    font-size: 29px;
    font-weight: 700;
    color: #cfd0db;
}
```
